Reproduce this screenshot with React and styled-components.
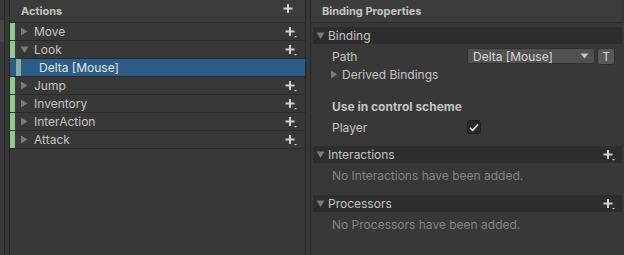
import styled, { createGlobalStyle } from 'styled-components';

const GlobalStyle = createGlobalStyle`
  html, body {
    margin: 0;
    padding: 0;
    background: #383838;
  }
  body {
    font-family: Inter, "Noto Sans", sans-serif;
    font-size: 12px;
    color: #c4c4c4;
  }
`;

const actions = [
  { name: 'Move', open: false },
  { name: 'Look', open: true, bindings: ['Delta [Mouse]'] },
  { name: 'Jump', open: false },
  { name: 'Inventory', open: false },
  { name: 'InterAction', open: false },
  { name: 'Attack', open: false },
];

const PlusIcon = ({ dropdown }) => (
  <svg width="14" height="12" viewBox="0 0 14 12">
    <path d="M5 1v9M0.5 5.5h9" stroke="#d2d2d2" strokeWidth="2" fill="none" />
    {dropdown && <path d="M9 10h3l-1.5 1.5z" fill="#d2d2d2" />}
  </svg>
);

const Arrow = ({ open, color = '#7a7a7a' }) => (
  <svg width="9" height="9" viewBox="0 0 9 9">
    {open ? (
      <path d="M0.5 1.5h8l-4 6.5z" fill={color} />
    ) : (
      <path d="M1 0.5v8l6.5-4z" fill={color} />
    )}
  </svg>
);

const App = () => (
  <>
    <GlobalStyle />
    <Frame>
      <MapsStub>
        <MapsSelected />
      </MapsStub>
      <ActionsPanel>
        <PanelHeader>
          <span>Actions</span>
          <HeaderPlus>
            <PlusIcon />
          </HeaderPlus>
        </PanelHeader>
        {actions.map(a => (
          <div key={a.name}>
            <ActionRow>
              <ColorBar />
              <Arrow open={a.open} />
              <RowLabel>{a.name}</RowLabel>
              <RowPlus>
                <PlusIcon dropdown />
              </RowPlus>
            </ActionRow>
            {a.open &&
              a.bindings.map(b => (
                <BindingRow key={b}>
                  <BindingBar />
                  <BindingLabel>{b}</BindingLabel>
                </BindingRow>
              ))}
          </div>
        ))}
      </ActionsPanel>
      <Splitter />
      <PropsPanel>
        <PanelHeader>
          <span>Binding Properties</span>
        </PanelHeader>
        <Foldout>
          <Arrow open />
          <span>Binding</span>
        </Foldout>
        <FieldRow>
          <FieldLabel>Path</FieldLabel>
          <Dropdown>
            <span>Delta [Mouse]</span>
            <svg width="9" height="6" viewBox="0 0 9 6">
              <path d="M0.5 0.5h8l-4 5z" fill="#c4c4c4" />
            </svg>
          </Dropdown>
          <TButton>T</TButton>
        </FieldRow>
        <SubFoldout>
          <Arrow />
          <span>Derived Bindings</span>
        </SubFoldout>
        <SchemeTitle>Use in control scheme</SchemeTitle>
        <FieldRow $top={4}>
          <FieldLabel>Player</FieldLabel>
          <Checkbox>
            <svg width="10" height="9" viewBox="0 0 10 9">
              <path d="M1 4.8l2.6 2.6L9 1.5" stroke="#e0e0e0" strokeWidth="1.6" fill="none" />
            </svg>
          </Checkbox>
        </FieldRow>
        <Foldout $top={10}>
          <Arrow open />
          <span>Interactions</span>
          <FoldPlus>
            <PlusIcon dropdown />
          </FoldPlus>
        </Foldout>
        <EmptyNote>No Interactions have been added.</EmptyNote>
        <Foldout $top={12}>
          <Arrow open />
          <span>Processors</span>
          <FoldPlus>
            <PlusIcon dropdown />
          </FoldPlus>
        </Foldout>
        <EmptyNote>No Processors have been added.</EmptyNote>
      </PropsPanel>
    </Frame>
  </>
);

const Frame = styled.div`
  display: flex;
  width: 624px;
  height: 255px;
  background: #383838;
  overflow: hidden;
`;

const MapsStub = styled.div`
  width: 4px;
  border-right: 1px solid #242424;
  padding-top: 20px;
  margin-right: 4px;
`;

const MapsSelected = styled.div`
  height: 22px;
  background: #464646;
`;

const ActionsPanel = styled.div`
  width: 295px;
  border-left: 1px solid #242424;
  border-right: 1px solid #242424;
  display: flex;
  flex-direction: column;
`;

const PanelHeader = styled.div`
  height: 22px;
  display: flex;
  align-items: center;
  justify-content: space-between;
  padding: 0 8px 0 11px;
  font-weight: 700;
  font-size: 11px;
  background: #3c3c3c;
  border-bottom: 1px solid #2a2a2a;
`;

const HeaderPlus = styled.div`
  display: flex;
  margin-top: -4px;
`;

const ActionRow = styled.div`
  height: 17px;
  display: flex;
  align-items: center;
  border-bottom: 1px solid #2a2a2a;
  padding-right: 6px;
  svg:first-of-type {
    margin-left: 5px;
  }
`;

const ColorBar = styled.div`
  width: 5px;
  align-self: stretch;
  background: #8fc98b;
`;

const RowLabel = styled.span`
  margin-left: 5px;
  flex: 1;
  font-size: 12px;
`;

const RowPlus = styled.div`
  display: flex;
`;

const BindingRow = styled.div`
  height: 17px;
  display: flex;
  align-items: center;
  background: #2c5d87;
  border-bottom: 1px solid #2a2a2a;
  padding-left: 6px;
`;

const BindingBar = styled.div`
  width: 5px;
  align-self: stretch;
  background: #89abab;
`;

const BindingLabel = styled.span`
  margin-left: 18px;
  color: #e4e4e4;
`;

const Splitter = styled.div`
  width: 4px;
`;

const PropsPanel = styled.div`
  flex: 1;
  border-left: 1px solid #242424;
  display: flex;
  flex-direction: column;
  padding-right: 2px;
`;

const Foldout = styled.div`
  height: 17px;
  margin: ${p => p.$top ?? 4}px 0 0 2px;
  display: flex;
  align-items: center;
  gap: 3px;
  padding-left: 3px;
  padding-right: 5px;
  background: #2d2d2d;
  font-size: 12px;
`;

const FoldPlus = styled.div`
  margin-left: auto;
  display: flex;
`;

const FieldRow = styled.div`
  height: 18px;
  margin-top: ${p => p.$top ?? 3}px;
  display: flex;
  align-items: center;
  padding-left: 21px;
`;

const FieldLabel = styled.span`
  width: 135px;
`;

const Dropdown = styled.div`
  width: 128px;
  height: 16px;
  padding: 0 5px;
  box-sizing: border-box;
  display: flex;
  align-items: center;
  justify-content: space-between;
  background: #515151;
  border: 1px solid #303030;
  border-radius: 3px;
  color: #d6d6d6;
`;

const TButton = styled.div`
  width: 18px;
  height: 17px;
  margin-left: 2px;
  box-sizing: border-box;
  display: flex;
  align-items: center;
  justify-content: center;
  background: #585858;
  border: 1px solid #303030;
  border-radius: 3px;
  color: #d6d6d6;
  font-size: 12px;
`;

const SubFoldout = styled.div`
  height: 18px;
  display: flex;
  align-items: center;
  gap: 3px;
  padding-left: 19px;
`;

const SchemeTitle = styled.div`
  margin-top: 16px;
  padding-left: 21px;
  font-weight: 700;
  font-size: 12px;
`;

const Checkbox = styled.div`
  width: 12px;
  height: 12px;
  display: flex;
  align-items: center;
  justify-content: center;
  background: #2a2a2a;
  border: 1px solid #202020;
  border-radius: 3px;
`;

const EmptyNote = styled.div`
  padding: 5px 0 0 21px;
  color: #848484;
`;

export default App;
